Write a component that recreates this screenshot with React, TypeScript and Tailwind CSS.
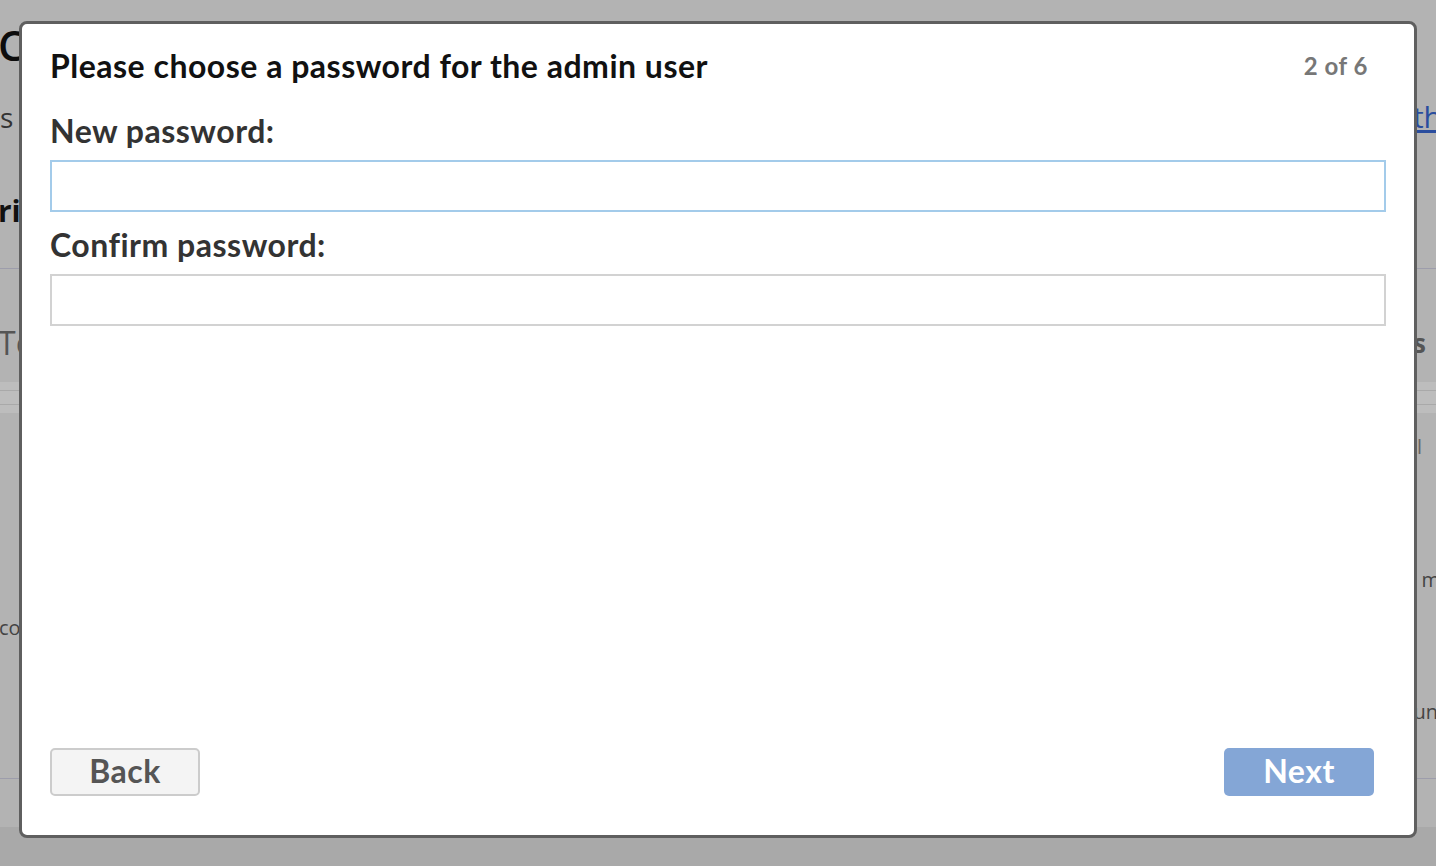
import React from "react";

export default function App() {
  return (
    <div className="relative w-full h-[866px] overflow-hidden bg-[#b3b3b3] font-['Lato',sans-serif]">
      {/* underlying page (dimmed) */}
      <div className="flex flex-col h-full">
        <div className="h-[90px] flex items-center justify-between">
          <span className="-ml-[2px] text-[42px] leading-none font-semibold text-[#0d0d0d] font-['Open_Sans',sans-serif]">Co</span>
        </div>
        <div className="h-[54px] flex items-center justify-between">
          <span className="text-[28px] leading-none text-[#333] font-['Open_Sans',sans-serif]">s</span>
          <span className="-mr-[6px] text-[30px] leading-none text-[#2a4d9e] underline font-['Open_Sans',sans-serif]">th</span>
        </div>
        <div className="h-[40px]" />
        <div className="h-[54px] flex items-center justify-between">
          <span className="-ml-[2px] text-[30px] leading-none font-bold text-[#111] font-['Open_Sans',sans-serif]">ri</span>
        </div>
        <div className="h-[30px]" />
        <div className="h-px bg-[#9d9dab]" />
        <div className="h-[47px]" />
        <div className="h-[54px] flex items-center justify-between">
          <span className="-ml-[2px] text-[32px] leading-none text-[#555] font-['Open_Sans',sans-serif]">To</span>
          <span className="mr-[10px] text-[26px] leading-none font-bold text-[#555] font-['Open_Sans',sans-serif]">s</span>
        </div>
        <div className="h-[12px]" />
        <div className="h-[31px] bg-[#bdbdbd] flex flex-col justify-center gap-[13px]">
          <div className="h-px bg-[#a9a9a9]" />
          <div className="h-px bg-[#a9a9a9]" />
        </div>
        <div className="h-[7px]" />
        <div className="h-[54px] flex items-center justify-end">
          <span className="mr-[14px] text-[20px] leading-none text-[#666] font-['Open_Sans',sans-serif]">l</span>
        </div>
        <div className="h-[86px]" />
        <div className="h-[40px] flex items-center justify-end">
          <span className="-mr-[4px] text-[20px] leading-none text-[#444] font-['Open_Sans',sans-serif]">m</span>
        </div>
        <div className="h-[8px]" />
        <div className="h-[40px] flex items-center justify-start">
          <span className="-ml-[1px] text-[20px] leading-none text-[#444] font-['Open_Sans',sans-serif]">co</span>
        </div>
        <div className="h-[44px]" />
        <div className="h-[40px] flex items-center justify-end">
          <span className="-mr-[2px] text-[20px] leading-none text-[#444] font-['Open_Sans',sans-serif]">un</span>
        </div>
        <div className="h-[46px]" />
        <div className="h-px bg-[#9d9dab]" />
        <div className="h-[48px]" />
        <div className="flex-1 bg-[#a9a9a9]" />
      </div>

      {/* modal */}
      <div className="absolute left-[19px] top-[21px] w-[1398px] h-[817px] border-[3px] border-[#5f5f5f] rounded-[8px] bg-white flex flex-col pt-[24px] px-[28px] pb-[39px]">
        <div className="flex items-center justify-between">
          <h1 className="text-[32px] leading-[36px] tracking-[0.5px] font-bold text-[#111]">Please choose a password for the admin user</h1>
          <span className="mr-[18px] text-[24px] leading-[36px] tracking-[0.5px] font-bold text-[#777]">2 of 6</span>
        </div>
        <label className="mt-[29px] text-[32px] leading-[36px] tracking-[0.5px] font-bold text-[#333]">New password:</label>
        <input type="password" className="mt-[11px] h-[52px] border-2 border-[#a3cbea] outline-none px-3" />
        <label className="mt-[15px] text-[32px] leading-[36px] tracking-[0.5px] font-bold text-[#333]">Confirm password:</label>
        <input type="password" className="mt-[11px] h-[52px] border-2 border-[#d2d2d2] outline-none px-3" />
        <div className="mt-auto flex items-center justify-between">
          <button className="w-[150px] h-[48px] pb-[3px] rounded-[5px] bg-[#f4f4f4] border-2 border-[#cccccc] text-[32px] leading-none tracking-[0.5px] font-bold text-[#555]">Back</button>
          <button className="mr-[12px] w-[150px] h-[48px] pb-[3px] rounded-[5px] bg-[#84a6d6] text-[32px] leading-none tracking-[0.5px] font-bold text-white">Next</button>
        </div>
      </div>
    </div>
  );
}
